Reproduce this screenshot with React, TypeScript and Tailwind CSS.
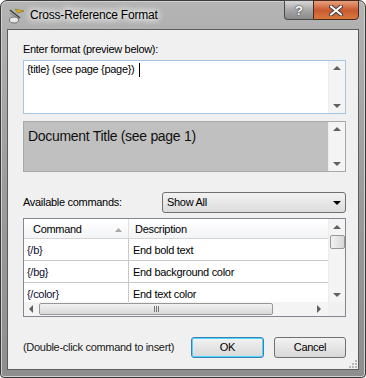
const font = { fontFamily: '"Liberation Sans", Arial, sans-serif' };

function Arrow({ dir, className = '' }: { dir: 'up' | 'down' | 'left' | 'right'; className?: string }) {
  const pts = {
    up: '0,4 4,0 8,4',
    down: '0,0 8,0 4,4',
    left: '4,0 4,8 0,4',
    right: '0,0 4,4 0,8',
  }[dir];
  const w = dir === 'up' || dir === 'down' ? 8 : 4;
  const h = dir === 'up' || dir === 'down' ? 4 : 8;
  return (
    <svg width={w} height={h} viewBox={`0 0 ${w} ${h}`} className={className}>
      <polygon points={pts} fill="#606060" />
    </svg>
  );
}

// arrows-only scrollbar for the two text boxes
function VScroll() {
  return (
    <div className="w-[17px] flex flex-col items-center justify-between bg-[#f4f4f4] border-l border-[#ececec] py-[5px]">
      <Arrow dir="up" />
      <Arrow dir="down" />
    </div>
  );
}

const rows = [
  ['{/b}', 'End bold text'],
  ['{/bg}', 'End background color'],
  ['{/color}', 'End text color'],
];

export default function App() {
  return (
    <div style={font} className="w-[366px] h-[378px] bg-white">
      <div className="w-[366px] h-[378px] flex flex-col rounded-t-[7px] rounded-b-[4px] border border-[#3a3a3a] bg-gradient-to-b from-[#b4b4b4] via-[#9c9c9c] to-[#8e8e8e] shadow-[inset_0_0_0_1px_#d0d0d0]">
        {/* title bar */}
        <div className="h-[28px] flex items-start relative">
          <div className="flex items-center gap-[5px] pl-[7px] pt-[5px]">
            <svg width="17" height="17" viewBox="0 0 17 17">
              <ellipse cx="6" cy="13" rx="4.5" ry="3" fill="#e8e8e8" stroke="#707070" />
              <path d="M2 3 L12 11" stroke="#404040" strokeWidth="1.6" />
              <path d="M2 6 L11 12" stroke="#808080" strokeWidth="1" />
              <path d="M7 2 L16 4 L10 6 Z" fill="#e0b020" stroke="#8a6a10" strokeWidth="0.6" />
            </svg>
            <span className="text-[12px] tracking-[-0.2px] text-black [text-shadow:0_0_6px_#fff,0_0_8px_#fff,0_0_10px_#fff]">Cross-Reference Format</span>
          </div>
          <div className="absolute right-[6px] top-[-1px] flex">
            <div className="w-[29px] h-[20px] rounded-bl-[4px] border border-[#4a4a4a] border-r-0 bg-gradient-to-b from-[#d8d8d8] via-[#a8a8a8] to-[#8a8a8a] flex items-center justify-center">
              <span className="text-white font-bold text-[13px] leading-none [text-shadow:0_0_1px_#333,0_0_2px_#333]">?</span>
            </div>
            <div className="w-[46px] h-[20px] rounded-br-[4px] border border-[#4a2a1a] bg-gradient-to-b from-[#e8a080] via-[#c85a30] to-[#d8783c] flex items-center justify-center">
              <svg width="14" height="11" viewBox="0 0 14 11">
                <path d="M2 1.5 L12 9.5 M12 1.5 L2 9.5" stroke="#3a3a3a" strokeWidth="4" strokeLinecap="round" />
                <path d="M2 1.5 L12 9.5 M12 1.5 L2 9.5" stroke="#ffffff" strokeWidth="2.2" strokeLinecap="round" />
              </svg>
            </div>
          </div>
        </div>

        {/* client area */}
        <div className="flex-1 mx-[6px] mb-[7px] border border-[#5c5c5c] bg-[#f0f0f0] pl-[15px] pr-[12px] pt-[12px] text-[11px] tracking-[-0.3px] text-black flex flex-col relative">
          <div className="leading-[15px] h-[15px]">Enter format (preview below):</div>
          <div className="mt-[3px] h-[54px] border border-[#a6c5e4] bg-white flex">
            <div className="flex-1 px-[3px] pt-[1px] leading-[15px]">
              {'{title} (see page {page})'}
              <span className="inline-block w-px h-[14px] bg-black align-middle ml-[4px]" />
            </div>
            <VScroll />
          </div>

          <div className="mt-[7px] h-[51px] border border-[#a8a8a8] bg-[#c0c0c0] flex">
            <div className="flex-1 px-[4px] pt-[5px] text-[14px] leading-[18px] text-[#111]">
              Document Title (see page 1)
            </div>
            <VScroll />
          </div>

          <div className="mt-[20px] flex items-center h-[21px]">
            <div className="w-[139px]">Available commands:</div>
            <div className="flex-1 h-[21px] rounded-[3px] border border-[#707070] bg-gradient-to-b from-[#f2f2f2] to-[#dcdcdc] flex items-center pl-[4px] pr-[4px]">
              <span className="flex-1">Show All</span>
              <svg width="8" height="4" viewBox="0 0 8 4"><polygon points="0,0 8,0 4,4" fill="#000" /></svg>
            </div>
          </div>

          <div className="mt-[5px] h-[99px] border border-[#828790] bg-white flex flex-col">
            <div className="flex-1 flex min-h-0">
              <div className="flex-1 flex flex-col min-w-0">
                <div className="h-[20px] flex border-b border-[#d5d5d5] bg-gradient-to-b from-white to-[#f3f4f6] shrink-0">
                  <div className="w-[105px] flex items-center pl-[9px] pr-[6px] border-r border-[#e0e0e0] pt-[2px]">
                    <span className="flex-1">Command</span>
                    <svg width="7" height="4" viewBox="0 0 7 4"><polygon points="0,4 3.5,0 7,4" fill="#a8a8a8" /></svg>
                  </div>
                  <div className="flex-1 flex items-center pl-[6px] pt-[2px]">Description</div>
                </div>
                {rows.map(([c, d]) => (
                  <div key={c} className="h-[22px] flex border-b border-[#c8c8c8] shrink-0 pt-[2px]">
                    <div className="w-[105px] border-r border-[#c8c8c8] -mt-[2px] pt-[2px] pl-[3px] flex items-center text-[#0c0c30]">{c}</div>
                    <div className="flex-1 pl-[4px] flex items-center">{d}</div>
                  </div>
                ))}
              </div>
              <div className="w-[17px] flex flex-col items-center bg-[#f4f4f4] border-l border-[#ececec] pt-[6px] pb-[5px]">
                <Arrow dir="up" />
                <div className="mt-[6px] w-[15px] h-[14px] rounded-[2px] border border-[#979797] bg-gradient-to-r from-[#f2f2f2] to-[#d8d8d8]" />
                <div className="flex-1" />
                <Arrow dir="down" />
              </div>
            </div>
            <div className="h-[14px] flex shrink-0">
              <div className="flex-1 flex items-center bg-[#f4f4f4] px-[5px]">
                <Arrow dir="left" />
                <div className="ml-[6px] w-[234px] h-[12px] rounded-[2px] border border-[#979797] bg-gradient-to-b from-[#f2f2f2] to-[#d8d8d8] flex items-center justify-center">
                  <div className="flex gap-[1px]">
                    <div className="w-px h-[6px] bg-[#777]" />
                    <div className="w-px h-[6px] bg-[#777]" />
                    <div className="w-px h-[6px] bg-[#777]" />
                  </div>
                </div>
                <div className="flex-1" />
                <Arrow dir="right" className="mr-[2px]" />
              </div>
              <div className="w-[17px] bg-[#f0f0f0]" />
            </div>
          </div>

          <div className="mt-[20px] flex items-center h-[21px]">
            <div className="flex-1 text-[#1a1a1a] whitespace-nowrap">(Double-click command to insert)</div>
            <button className="w-[73px] h-[21px] rounded-[3px] border border-[#3c7fb1] bg-gradient-to-b from-[#f2f2f2] to-[#d8d8d8] shadow-[inset_0_0_0_1px_#48d8fb] mr-[10px]">OK</button>
            <button className="w-[72px] h-[21px] rounded-[3px] border border-[#707070] bg-gradient-to-b from-[#f2f2f2] to-[#d8d8d8]">Cancel</button>
          </div>

          <svg width="8" height="8" viewBox="0 0 8 8" className="absolute right-[1px] bottom-[1px]">
            {[
              [6, 0], [6, 3], [3, 3], [6, 6], [3, 6], [0, 6],
            ].map(([x, y]) => (
              <rect key={`${x}-${y}`} x={x} y={y} width="2" height="2" fill="#b8b8b8" />
            ))}
          </svg>
        </div>
      </div>
    </div>
  );
}
